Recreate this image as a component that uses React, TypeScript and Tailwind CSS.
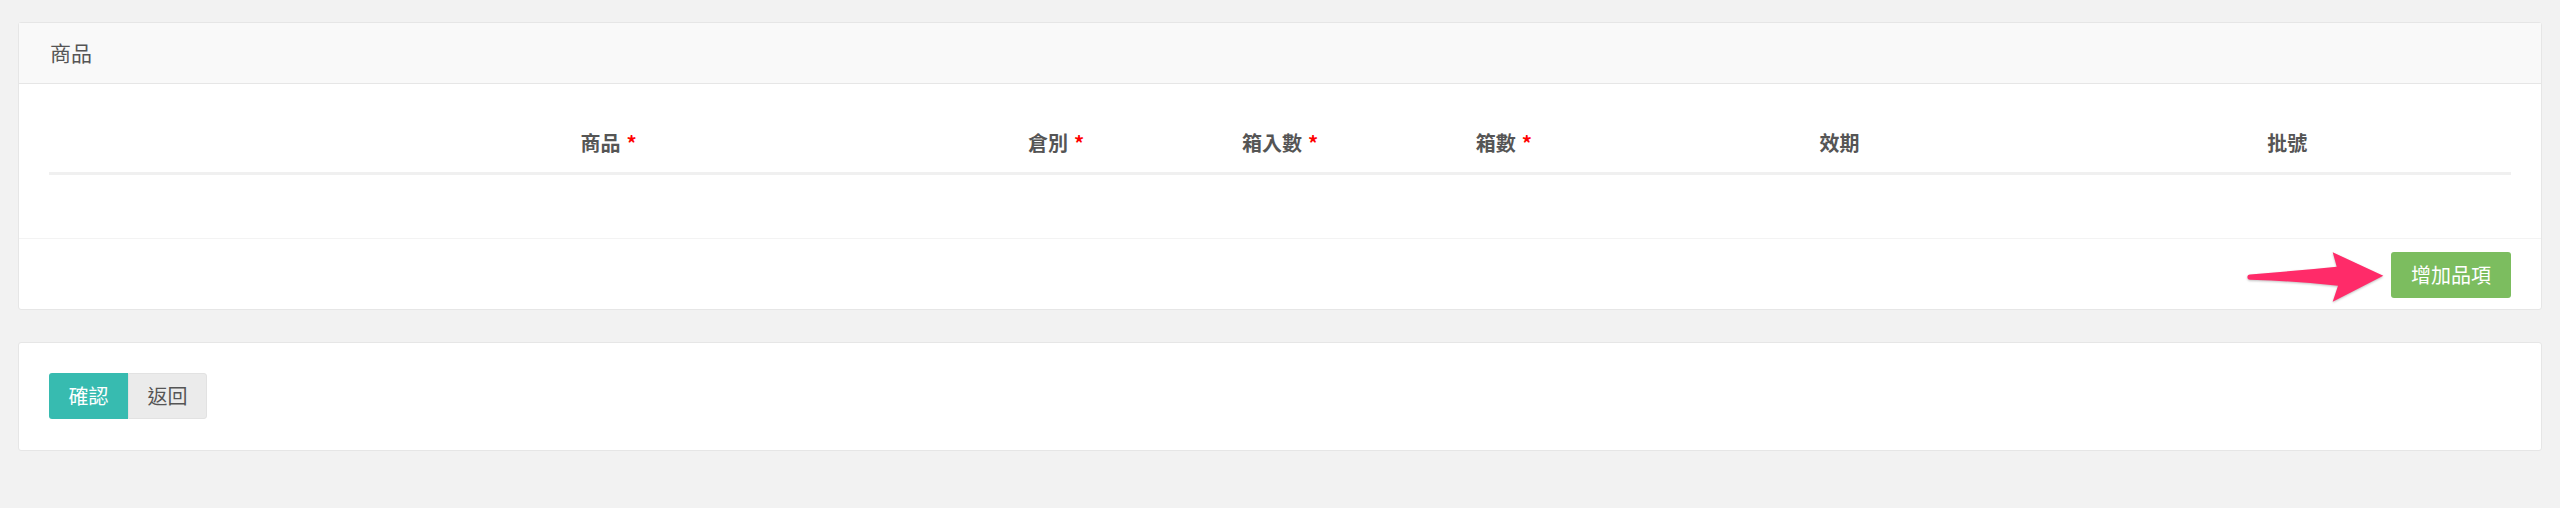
const columns = [
  { label: "", required: false },
  { label: "商品", required: true },
  { label: "倉別", required: true },
  { label: "箱入數", required: true },
  { label: "箱數", required: true },
  { label: "效期", required: false },
  { label: "批號", required: false },
];

const Arrow = () => (
  <svg
    width="140"
    height="60"
    viewBox="0 0 140 60"
    className="-my-[10px] mr-[6px] translate-y-[4px] drop-shadow-[0_1px_1px_rgba(0,0,0,0.25)]"
  >
    <path
      d="M5,25.5 Q50,22 91.7,17.7 L87.7,3.3 L138.3,26.7 L87.7,52.7 L93,36.7 Q50,32 5,30.7 A2.6,2.6 0 0 1 5,25.5 Z"
      fill="#ff2b69"
    />
  </svg>
);

const App = () => {
  return (
    <div className="min-h-screen w-full bg-[#f2f2f2] pl-[18px] pt-[22px] font-['Noto_Sans_CJK_TC','Noto_Sans',sans-serif] text-[#555]">
      <div className="w-[2524px]">
        {/* 商品 panel */}
        <div className="rounded-[3px] border border-[#e6e6e6] bg-white">
          <div className="flex h-[61px] items-center border-b border-[#e6e6e6] bg-[#f9f9f9] pl-[31px] text-[21px]">
            商品
          </div>
          <div className="px-[30px] pt-[30px]">
            <div className="grid h-[61px] grid-cols-[1fr_3fr_1fr_1fr_1fr_2fr_2fr] items-center border-b-[3px] border-[#f0f0f0] text-[20px] font-bold">
              {columns.map((c, i) => (
                <div key={i} className="text-center">
                  {c.label}
                  {c.required && <span className="ml-[6px] text-[#ff0000]">*</span>}
                </div>
              ))}
            </div>
            <div className="h-[63px]" />
          </div>
          <div className="flex items-center justify-end border-t border-[#f3f3f3] px-[30px] pt-[13px] pb-[11px]">
            <Arrow />
            <button className="h-[46px] w-[120px] rounded-[3px] bg-[#7cbd5f] text-[20px] text-white">
              增加品項
            </button>
          </div>
        </div>

        {/* actions */}
        <div className="mt-[32px] flex rounded-[3px] border border-[#e6e6e6] bg-white px-[30px] pt-[30px] pb-[31px]">
          <button className="h-[46px] w-[79px] rounded-l-[3px] bg-[#37bbb0] text-[20px] text-white">
            確認
          </button>
          <button className="h-[46px] w-[79px] rounded-r-[3px] border border-[#e2e2e2] bg-[#ebebeb] text-[20px] text-[#555]">
            返回
          </button>
        </div>
      </div>
    </div>
  );
};

export default App;
